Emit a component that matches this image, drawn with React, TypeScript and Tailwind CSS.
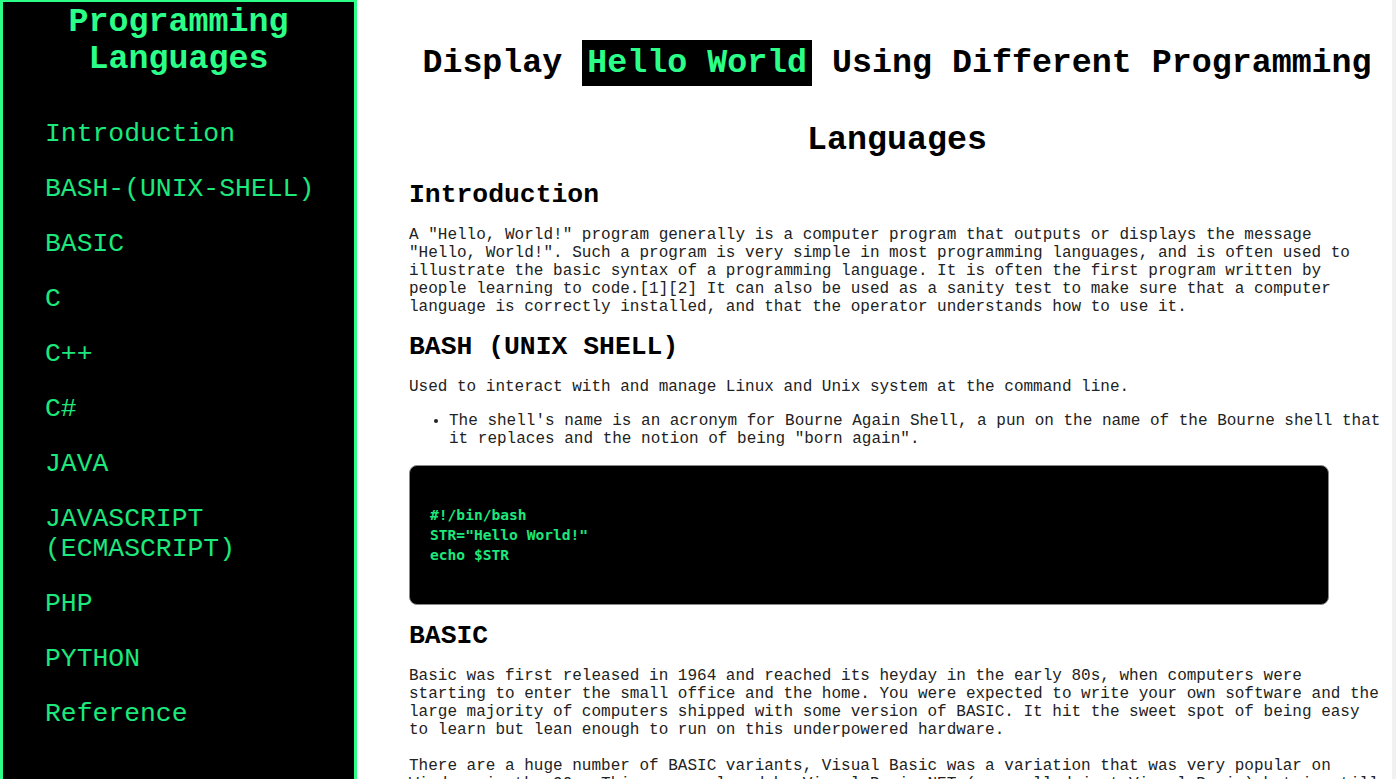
import React from "react";

const mono = { fontFamily: '"Liberation Mono", "Courier New", monospace' };

const navItems = [
  "Introduction",
  "BASH-(UNIX-SHELL)",
  "BASIC",
  "C",
  "C++",
  "C#",
  "JAVA",
  "JAVASCRIPT (ECMASCRIPT)",
  "PHP",
  "PYTHON",
  "Reference",
];

export default function App() {
  return (
    <div className="flex h-screen w-full overflow-hidden bg-white" style={mono}>
      <aside className="w-[357px] shrink-0 bg-black border-l-[3px] border-t-[2px] border-r-[3px] border-[#2bff88] h-[900px]">
        <h1 className="pt-[2px] text-center text-[33.3px] leading-[37px] font-bold text-[#2bff88]">
          Programming
          <br />
          Languages
        </h1>
        <nav className="mt-[41px] pl-[42px] pr-4 flex flex-col gap-[25px]">
          {navItems.map((n) => (
            <a
              key={n}
              className="block text-[26.4px] leading-[30px] text-[#1de87c] w-[290px]"
            >
              {n}
            </a>
          ))}
        </nav>
      </aside>

      <main className="flex-1 overflow-hidden pl-[52px] pr-[7px] text-black">
        <h1 className="mt-[25px] text-center text-[33.3px] leading-[77px] font-bold">
          Display{" "}
          <span className="bg-black text-[#2bff88] py-[4px] px-[5px]">Hello World</span>{" "}
          Using Different Programming Languages
        </h1>

        <h2 className="mt-[1px] text-[26.4px] leading-[30px] font-bold">Introduction</h2>
        <p className="mt-[16px] text-[16px] leading-[18px] text-[#222]">
          A "Hello, World!" program generally is a computer program that outputs or displays the
          message "Hello, World!". Such a program is very simple in most programming languages,
          and is often used to illustrate the basic syntax of a programming language. It is often
          the first program written by people learning to code.[1][2] It can also be used as a
          sanity test to make sure that a computer language is correctly installed, and that the
          operator understands how to use it.
        </p>

        <h2 className="mt-[16px] text-[26.4px] leading-[30px] font-bold">BASH (UNIX SHELL)</h2>
        <p className="mt-[16px] text-[16px] leading-[18px] text-[#222]">
          Used to interact with and manage Linux and Unix system at the command line.
        </p>
        <ul className="mt-[16px] list-disc pl-10 text-[16px] leading-[18px] text-[#222]">
          <li>
            The shell's name is an acronym for Bourne Again Shell, a pun on the name of the Bourne
            shell that it replaces and the notion of being "born again".
          </li>
        </ul>

        <div className="mt-[17px] w-[920px] h-[140px] rounded-[8px] bg-black border border-[#888] pl-[20px] pt-[39px]">
          <pre
            className="text-[14.6px] leading-[20px] font-semibold text-[#1de87c]"
            style={{ fontFamily: '"DejaVu Sans Mono", monospace' }}
          >
            {`#!/bin/bash
STR="Hello World!"
echo $STR`}
          </pre>
        </div>

        <h2 className="mt-[16px] text-[26.4px] leading-[30px] font-bold">BASIC</h2>
        <p className="mt-[16px] text-[16px] leading-[18px] text-[#222]">
          Basic was first released in 1964 and reached its heyday in the early 80s, when computers
          were starting to enter the small office and the home. You were expected to write your
          own software and the large majority of computers shipped with some version of BASIC. It
          hit the sweet spot of being easy to learn but lean enough to run on this underpowered
          hardware.
        </p>
        <p className="mt-[18px] text-[16px] leading-[18px] text-[#222]">
          There are a huge number of BASIC variants, Visual Basic was a variation that was very
          popular on Windows in the 90s. This was replaced by Visual Basic.NET (now called just
          Visual Basic) but is still widely used today.
        </p>
      </main>
      <div className="w-[4px] shrink-0 bg-[#f1f1f1]" />
    </div>
  );
}
